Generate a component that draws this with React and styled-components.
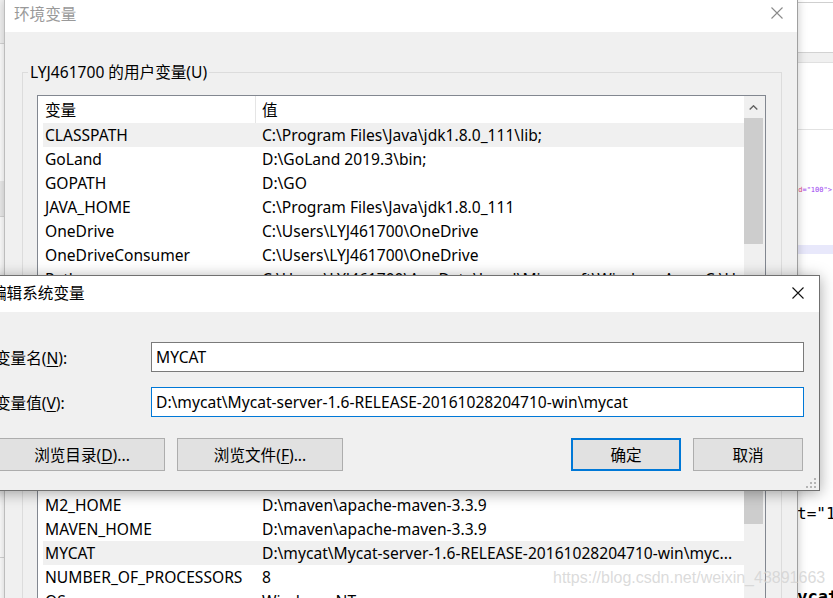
import React from 'react';
import styled, { createGlobalStyle } from 'styled-components';

const GlobalStyle = createGlobalStyle`
  html, body {
    margin: 0;
    padding: 0;
    background: #fff;
  }
  body {
    overflow: hidden;
    font-family: "Noto Sans", "Noto Sans CJK SC", sans-serif;
    font-size: 15.6px;
    color: #000;
  }
`;

const Desktop = styled.div`
  position: relative;
  width: 833px;
  height: 598px;
  overflow: hidden;
  background: #fff;
`;

// windows lying behind the main one
const BackStrip = styled.div`
  position: absolute;
  top: 0;
  left: ${p => p.$left}px;
  width: ${p => p.$width}px;
  height: 598px;
  background: #fff;
  overflow: hidden;
`;

const Band = styled.div`
  height: ${p => p.$h}px;
  background: ${p => p.$bg || '#fff'};
  border-bottom: ${p => (p.$line ? `1px solid ${p.$line}` : 'none')};
`;

const Code = styled.div`
  height: ${p => p.$h}px;
  display: flex;
  align-items: center;
  white-space: nowrap;
  margin-left: ${p => p.$shift || 0}px;
  font-family: "DejaVu Sans Mono", "Liberation Mono", monospace;
  font-size: ${p => p.$size}px;
  font-weight: ${p => (p.$bold ? 700 : 400)};
  color: #000;
`;

const Attr = styled.span`
  color: ${p => p.$c};
`;

const MainWindow = styled.div`
  position: absolute;
  left: 4px;
  top: 0;
  width: 792px;
  height: 660px;
  background: #f0f0f0;
  border-left: 1px solid #bdbdbd;
  border-right: 1px solid #a0a0a0;
  box-shadow: 0 0 9px rgba(0, 0, 0, 0.22);
`;

const TitleBar = styled.div`
  height: 32px;
  box-sizing: border-box;
  padding: 0 14px 6px 9px;
  background: #fff;
  display: flex;
  align-items: center;
  justify-content: space-between;
  color: #999;
`;

const GroupBox = styled.fieldset`
  margin: ${p => p.$top}px 15px 0 17px;
  padding: 0 15px 12px 14px;
  border: 1px solid #dcdcdc;
  min-width: 0;
`;

const GroupLegend = styled.legend`
  padding: 0 2px;
  margin-left: -9px;
  line-height: 20px;
`;

const ListView = styled.div`
  margin-top: 13px;
  height: ${p => p.$h}px;
  box-sizing: border-box;
  border: 1px solid #828790;
  background: #fff;
  display: grid;
  grid-template-columns: 1fr 21px;
  overflow: hidden;
`;

const ListBody = styled.div`
  min-width: 0;
  overflow: hidden;
`;

const HeaderRow = styled.div`
  height: 27px;
  display: grid;
  grid-template-columns: 218px 1fr;
  align-items: stretch;
`;

const HeaderCell = styled.div`
  display: flex;
  align-items: center;
  padding-left: ${p => p.$pad}px;
  border-right: ${p => (p.$sep ? '1px solid #e5e5e5' : 'none')};
`;

const RowLine = styled.div`
  height: 24px;
  margin-left: 5px;
  display: grid;
  grid-template-columns: 212px 1fr;
  align-items: center;
  background: ${p => (p.$selected ? '#f0f0f0' : 'transparent')};
`;

const Cell = styled.div`
  padding-left: ${p => p.$pad}px;
  white-space: nowrap;
  overflow: hidden;
  line-height: 24px;
`;

const ScrollTrack = styled.div`
  background: #f0f0f0;
  display: flex;
  flex-direction: column;
`;

const ArrowBox = styled.div`
  height: 22px;
  display: flex;
  align-items: center;
  justify-content: center;
  padding-right: 2px;
`;

const Thumb = styled.div`
  height: ${p => p.$h}px;
  margin-right: 2px;
  background: #cdcdcd;
`;

const ButtonRow = styled.div`
  margin-top: 10px;
  height: 30px;
  display: flex;
  justify-content: flex-end;
  gap: 10px;
`;

const SmallButton = styled.div`
  width: 95px;
  box-sizing: border-box;
  border: 1px solid #adadad;
  background: #e1e1e1;
  display: flex;
  align-items: center;
  justify-content: center;
`;

const Dialog = styled.div`
  position: absolute;
  left: -20px;
  top: 275px;
  width: 840px;
  height: 216px;
  box-sizing: border-box;
  border: 1px solid #707070;
  background: #f0f0f0;
  box-shadow: 0 2px 14px rgba(0, 0, 0, 0.35);
  display: flex;
  flex-direction: column;
`;

const DialogTitle = styled.div`
  height: 36px;
  box-sizing: border-box;
  padding: 0 15px 3px 10px;
  background: #fff;
  display: flex;
  align-items: center;
  justify-content: space-between;
`;

const Form = styled.div`
  padding: 30px 15px 0 14px;
  display: grid;
  grid-template-columns: 156px 1fr;
  row-gap: 15px;
  align-items: center;
`;

const Key = styled.span`
  text-decoration: underline;
  text-underline-offset: 2px;
`;

const TextBox = styled.div`
  height: 30px;
  box-sizing: border-box;
  padding: 0 4px;
  border: 1px solid ${p => (p.$focused ? '#0078d7' : '#7a7a7a')};
  background: #fff;
  display: flex;
  align-items: center;
  white-space: nowrap;
  overflow: hidden;
`;

const DialogButtons = styled.div`
  margin-top: 21px;
  padding: 0 16px 0 18px;
  height: 33px;
  display: flex;
  gap: 12px;
`;

const Spacer = styled.div`
  flex: 1;
`;

const Button = styled.div`
  width: ${p => p.$w}px;
  box-sizing: border-box;
  border: ${p => (p.$primary ? '2px solid #0078d7' : '1px solid #adadad')};
  background: #e1e1e1;
  display: flex;
  align-items: center;
  justify-content: center;
`;

const Grip = styled.svg`
  position: absolute;
  right: 2px;
  bottom: 1px;
`;

const Watermark = styled.div`
  position: absolute;
  left: 553px;
  top: 569px;
  font-family: "Liberation Sans", Arial, sans-serif;
  font-size: 16px;
  color: rgba(210, 210, 210, 0.8);
  white-space: nowrap;
`;

const CloseIcon = ({ color }) => (
  <svg width="12" height="12" viewBox="0 0 12 12">
    <path d="M0.5 0.5 L11.5 11.5 M11.5 0.5 L0.5 11.5" stroke={color} strokeWidth="1.1" fill="none" />
  </svg>
);

const userVars = [
  ['CLASSPATH', 'C:\\Program Files\\Java\\jdk1.8.0_111\\lib;', true],
  ['GoLand', 'D:\\GoLand 2019.3\\bin;'],
  ['GOPATH', 'D:\\GO'],
  ['JAVA_HOME', 'C:\\Program Files\\Java\\jdk1.8.0_111'],
  ['OneDrive', 'C:\\Users\\LYJ461700\\OneDrive'],
  ['OneDriveConsumer', 'C:\\Users\\LYJ461700\\OneDrive'],
  ['Path', 'C:\\Users\\LYJ461700\\AppData\\Local\\Microsoft\\WindowsApps;C:\\Users\\LYJ...'],
];

const systemVars = [
  ['ComSpec', 'C:\\WINDOWS\\system32\\cmd.exe'],
  ['DriverData', 'C:\\Windows\\System32\\Drivers\\DriverData'],
  ['JAVA_HOME', 'C:\\Program Files\\Java\\jdk1.8.0_111'],
  ['M2_HOME', 'D:\\maven\\apache-maven-3.3.9'],
  ['MAVEN_HOME', 'D:\\maven\\apache-maven-3.3.9'],
  ['MYCAT', 'D:\\mycat\\Mycat-server-1.6-RELEASE-20161028204710-win\\myc...', true],
  ['NUMBER_OF_PROCESSORS', '8'],
  ['OS', 'Windows_NT'],
];

const VarList = ({ rows, height, thumb }) => (
  <ListView $h={height}>
    <ListBody>
      <HeaderRow>
        <HeaderCell $pad={7} $sep>变量</HeaderCell>
        <HeaderCell $pad={6}>值</HeaderCell>
      </HeaderRow>
      {rows.map(([name, value, selected]) => (
        <RowLine key={name + value} $selected={selected}>
          <Cell $pad={2}>{name}</Cell>
          <Cell $pad={7}>{value}</Cell>
        </RowLine>
      ))}
    </ListBody>
    <ScrollTrack>
      <ArrowBox>
        <svg width="9" height="5" viewBox="0 0 9 5">
          <path d="M0.7 4.5 L4.5 0.8 L8.3 4.5" stroke="#606060" strokeWidth="1.4" fill="none" />
        </svg>
      </ArrowBox>
      <Thumb $h={thumb} />
    </ScrollTrack>
  </ListView>
);

export default function App() {
  return (
    <Desktop>
      <GlobalStyle />

      <BackStrip $left={0} $width={5}>
        <Band $h={43} $bg="#f3f3f3" $line="#d6d6d6" />
        <Band $h={137} />
        <Band $h={35} $bg="#ececec" $line="#d6d6d6" />
        <Band $h={280} />
        <Band $h={60} $line="#d6d6d6" />
      </BackStrip>

      <BackStrip $left={797} $width={36}>
        <Band $h={2} $line="#cfcfcf" />
        <Band $h={49} $line="#d2d2d2" />
        <Band $h={9} $bg="#f0f0f0" $line="#e0e0e0" />
        <Band $h={66} $line="#e2e2e2" />
        <Band $h={54} />
        <Code $h={12} $size={7} $shift={-3}>
          <Attr $c="#e0507a">id</Attr>
          <Attr $c="#9b3cf0">="100"&gt;</Attr>
        </Code>
        <Band $h={49} />
        <Band $h={9} $bg="#e8e8fb" />
        <Band $h={244} />
        <Code $h={30} $size={16}>t="1</Code>
        <Band $h={54} />
        <Code $h={30} $size={17} $bold $shift={-10}>Mycat</Code>
      </BackStrip>

      <MainWindow>
        <TitleBar>
          <span>环境变量</span>
          <CloseIcon color="#8a8a8a" />
        </TitleBar>

        <GroupBox $top={30}>
          <GroupLegend>LYJ461700 的用户变量(U)</GroupLegend>
          <VarList rows={userVars} height={197} thumb={126} />
          <ButtonRow>
            <SmallButton>新建(N)...</SmallButton>
            <SmallButton>编辑(E)...</SmallButton>
            <SmallButton>删除(D)</SmallButton>
          </ButtonRow>
        </GroupBox>

        <GroupBox $top={15}>
          <GroupLegend>系统变量(S)</GroupLegend>
          <VarList rows={systemVars} height={230} thumb={108} />
        </GroupBox>
      </MainWindow>

      <Dialog>
        <DialogTitle>
          <span>编辑系统变量</span>
          <CloseIcon color="#111" />
        </DialogTitle>
        <Form>
          <span>
            变量名(<Key>N</Key>):
          </span>
          <TextBox>MYCAT</TextBox>
          <span>
            变量值(<Key>V</Key>):
          </span>
          <TextBox $focused>D:\mycat\Mycat-server-1.6-RELEASE-20161028204710-win\mycat</TextBox>
        </Form>
        <DialogButtons>
          <Button $w={166}>
            浏览目录(<Key>D</Key>)...
          </Button>
          <Button $w={166}>
            浏览文件(<Key>F</Key>)...
          </Button>
          <Spacer />
          <Button $w={110} $primary>
            确定
          </Button>
          <Button $w={110}>取消</Button>
        </DialogButtons>
        <Grip width="11" height="11" viewBox="0 0 11 11">
          <g fill="#b4b4b4">
            <rect x="8" y="0" width="2" height="2" />
            <rect x="4" y="4" width="2" height="2" />
            <rect x="8" y="4" width="2" height="2" />
            <rect x="0" y="8" width="2" height="2" />
            <rect x="4" y="8" width="2" height="2" />
            <rect x="8" y="8" width="2" height="2" />
          </g>
        </Grip>
      </Dialog>

      <Watermark>https://blog.csdn.net/weixin_43891663</Watermark>
    </Desktop>
  );
}
